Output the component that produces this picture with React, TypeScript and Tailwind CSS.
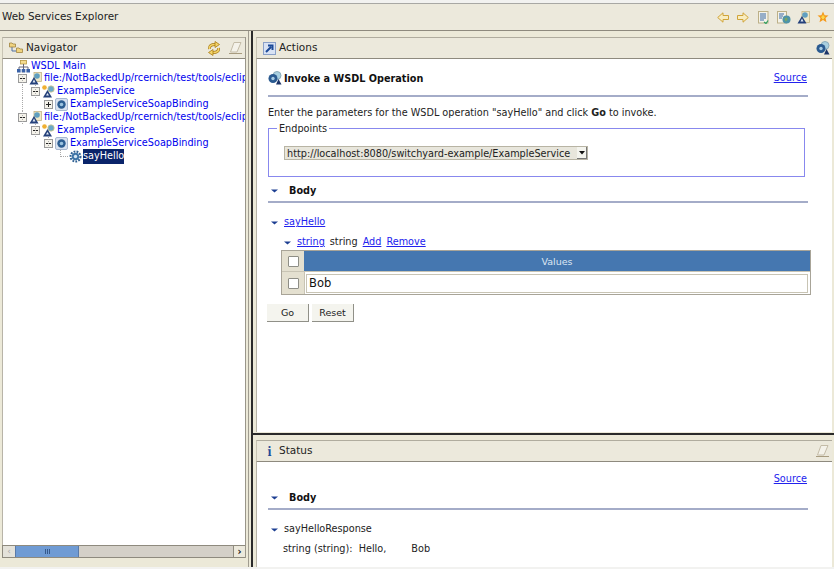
import React from "react";

const Box = ({ plus }: { plus?: boolean }) => (
  <svg width="9" height="9" viewBox="0 0 9 9" className="shrink-0">
    <rect x="0.5" y="0.5" width="8" height="8" fill="#f4f2ea" stroke="#9a9a9a" />
    <path d={plus ? "M2 4.5H7M4.5 2V7" : "M2 4.5H7"} stroke="#222" />
  </svg>
);

const Main = () => (
  <svg width="13" height="13" viewBox="0 0 13 13" className="shrink-0">
    <rect x="3.500" y="0.500" width="6" height="3.500" fill="#f4dc90" stroke="#b89840" strokeWidth="0.800" />
    <path d="M6.500 4V7M2 7H11M2 7V9M6.500 7V9M11 7V9" stroke="#667" />
    <rect x="0" y="9" width="3.600" height="3.500" fill="#3a62a8" />
    <rect x="4.700" y="9" width="3.600" height="3.500" fill="#3a62a8" />
    <rect x="9.400" y="9" width="3.600" height="3.500" fill="#3a62a8" />
  </svg>
);

const Wsdl = ({ big }: { big?: boolean }) => (
  <svg width="13" height="13" viewBox="0 0 13 13" className="shrink-0">
    <rect x="5" y="0.500" width="7.500" height={big ? 11 : 9} fill="#efe8c8" stroke="#c4b484" strokeWidth="0.800" />
    <circle cx="8" cy="4" r="2.800" fill="#5f9fc0" />
    <path d="M0.500 12.500L5 5L9.500 12.500Z" fill="#24407a" />
    <path d="M3.500 10.500L5 7.500L6.500 10.500Z" fill="#dfe8f4" />
  </svg>
);

const Svc = () => (
  <svg width="13" height="13" viewBox="0 0 13 13" className="shrink-0">
    <circle cx="2.500" cy="2.500" r="2.300" fill="#f0b030" />
    <circle cx="9" cy="4" r="3.200" fill="#6aa8c8" stroke="#dcc880" strokeWidth="0.700" />
    <path d="M1 12.500L5.500 5L10 12.500Z" fill="#24407a" />
    <path d="M4 10.500L5.500 8L7 10.500Z" fill="#e0e8f4" />
  </svg>
);

const Bind = () => (
  <svg width="13" height="13" viewBox="0 0 13 13" className="shrink-0">
    <rect x="0.500" y="0.500" width="12" height="12" rx="1.500" fill="#d8e2f0" stroke="#a8b8d0" />
    <circle cx="6.500" cy="6.500" r="4.200" fill="#2c5e92" />
    <circle cx="6.500" cy="6.500" r="1.800" fill="#9cc4e0" />
  </svg>
);

const Gear = () => (
  <svg width="13" height="13" viewBox="0 0 13 13" className="shrink-0">
    <circle cx="6.500" cy="6.500" r="5" fill="none" stroke="#2c5e92" strokeWidth="2" strokeDasharray="1.800 1.200" />
    <circle cx="6.500" cy="6.500" r="3.800" fill="#3f75a8" />
    <circle cx="6.500" cy="6.500" r="1.700" fill="#d8e8f4" />
  </svg>
);

const Twisty = () => (
  <svg width="7" height="4" viewBox="0 0 7 4" className="shrink-0">
    <path d="M0 0.500H7L3.500 3.500Z" fill="#1c3e92" />
  </svg>
);

const Eraser = () => (
  <svg width="15" height="14" viewBox="0 0 15 14" className="shrink-0">
    <path d="M6 1.500H13L9 11H2.500Z" fill="#f4f2ea" stroke="#c4bca8" />
    <path d="M1 12.500H14" stroke="#a89c80" />
  </svg>
);

const Sync = () => (
  <svg width="14" height="15" viewBox="0 0 14 15" className="shrink-0">
    <path d="M2.500 8C2 4.500 4.500 3.500 8 3.500" fill="none" stroke="#a87c18" strokeWidth="3" />
    <path d="M2.500 8C2 4.500 4.500 3.500 8 3.500" fill="none" stroke="#f4d468" strokeWidth="1.500" />
    <path d="M8 0.500L12.500 3.500L8 6.500Z" fill="#f4d468" stroke="#a87c18" strokeWidth="0.800" />
    <path d="M11.500 7C12 10.500 9.500 11.500 6 11.500" fill="none" stroke="#a87c18" strokeWidth="3" />
    <path d="M11.500 7C12 10.500 9.500 11.500 6 11.500" fill="none" stroke="#f4d468" strokeWidth="1.500" />
    <path d="M6 8.500L1.500 11.500L6 14.500Z" fill="#f4d468" stroke="#a87c18" strokeWidth="0.800" />
  </svg>
);

const Arrow = ({ right }: { right?: boolean }) => (
  <svg width="12" height="11" viewBox="0 0 12 11" className="shrink-0">
    <path
      d={right ? "M0.500 3.500H6V0.800L11.300 5.500L6 10.200V7.500H0.500Z" : "M11.500 3.500H6V0.800L0.700 5.500L6 10.200V7.500H11.500Z"}
      fill="#f8ecc0"
      stroke="#d0a438"
    />
  </svg>
);

const DocA = () => (
  <svg width="11" height="13" viewBox="0 0 11 13" className="shrink-0">
    <rect x="0.500" y="0.500" width="9.500" height="11.500" fill="#f4f2e8" stroke="#bcb088" />
    <path d="M2 3H8M2 5H8M2 7H8M2 9H6" stroke="#3a6aa8" />
    <path d="M6 11L8 12.500L10 9.500" stroke="#30a060" fill="none" strokeWidth="1.200" />
  </svg>
);

const DocB = () => (
  <svg width="14" height="13" viewBox="0 0 14 13" className="shrink-0">
    <rect x="0.500" y="0.500" width="9" height="11.500" fill="#f4f2e8" stroke="#bcb088" />
    <path d="M2 3H7M2 5H6M2 7H5" stroke="#3a6aa8" />
    <circle cx="9.500" cy="8.500" r="4" fill="#4f94a8" />
    <path d="M7.500 7.500L10 6.500L10.500 9L8.500 10.500Z" fill="#7ca860" />
  </svg>
);

const Star = () => (
  <svg width="12" height="12" viewBox="0 0 12 12" className="shrink-0">
    <path d="M6 0.500L7.600 4.200L11.500 4.500L8.500 7L9.500 11.200L6 9L2.500 11.200L3.500 7L0.500 4.500L4.400 4.200Z" fill="#f49a1c" />
    <path d="M6 3.500L7 5.500L8.500 6L7 7L7 8.500L6 7.800L5 8.500L5 7L3.500 6L5 5.500Z" fill="#fbd84c" />
  </svg>
);

const Nav = () => (
  <svg width="14" height="12" viewBox="0 0 14 12" className="shrink-0">
    <path d="M3 4V9H7" stroke="#4f6fa0" fill="none" />
    <path d="M0.500 1H3L4 2H6.500V5H0.500Z" fill="#f0d480" stroke="#a08440" strokeWidth="0.800" />
    <path d="M7.500 6H10L11 7H13.500V10.500H7.500Z" fill="#f0d480" stroke="#a08440" strokeWidth="0.800" />
  </svg>
);

const Run = () => (
  <svg width="14" height="14" viewBox="0 0 14 14" className="shrink-0">
    <circle cx="9" cy="4.500" r="4" fill="#a8cfe0" stroke="#8aaab8" />
    <circle cx="5" cy="7.500" r="4.500" fill="#2a5a90" />
    <circle cx="5" cy="7.500" r="1.700" fill="#a8cce4" />
    <path d="M8 13.500L10.500 8L13.500 13.500Z" fill="#1c3468" />
  </svg>
);

const Link = ({ children }: { children: React.ReactNode }) => (
  <span className="text-[#2222ee] underline">{children}</span>
);

const Row = ({ pad, lines, h, gap, children }: { pad: number; lines?: number[]; h?: boolean; gap?: boolean; children: React.ReactNode }) => (
  <div
    className={`relative flex items-center whitespace-nowrap ${h ? "h-[12px]" : "h-[13px]"} ${gap ? "gap-[1px]" : "gap-[2px]"}`}
    style={{ paddingLeft: pad }}
  >
    {lines?.map((x) => (
      <i key={x} className="absolute top-0 h-[13px] border-l border-dotted border-[#aaa]" style={{ left: x }} />
    ))}
    {children}
  </div>
);

const T = ({ children }: { children: React.ReactNode }) => <span className="text-[#0000ee]">{children}</span>;

const PanelHead = ({ icon, title, right }: { icon: React.ReactNode; title: string; right?: React.ReactNode }) => (
  <div className="flex h-[22px] shrink-0 items-center border-y border-l border-y-[#8e8a7e] border-l-[#c8c4b4] border-t-[#b0ac9e] bg-[#ece9dc] pl-[6px] pr-[2px]">
    {icon}
    <span className="ml-[3px] text-[10.500px] text-[#222]">{title}</span>
    <div className="ml-auto flex items-center gap-[7px]">{right}</div>
  </div>
);

const Rule = () => <div className="h-[2px] bg-[#a4acc8]" />;

const Check = () => <div className="h-[11px] w-[11px] rounded-[1px] border border-[#8e8e86] bg-white" />;

const SectionHead = () => (
  <div className="flex h-[14px] items-center pl-[3px] pt-[2px]">
    <Twisty />
    <b className="ml-[11px] text-[#111]">Body</b>
  </div>
);

export default function App() {
  return (
    <div
      className="flex h-[569px] w-[834px] flex-col overflow-hidden bg-[#ece9d8] text-[9.700px] text-[#222]"
      style={{ fontFamily: '"DejaVu Sans", sans-serif' }}
    >
      <div className="h-[3px] shrink-0 bg-[#f2f2f0]" />
      <div className="flex h-[28px] shrink-0 items-center border-y border-t-[#a8a8a4] border-b-[#8e8a7e] bg-[#ece9dc] pl-[2px] pr-[5px]">
        <span className="text-[10.400px] text-[#222]">Web Services Explorer</span>
        <div className="ml-auto flex items-center">
          <Arrow />
          <div className="w-[8px]" />
          <Arrow right />
          <div className="w-[9px]" />
          <DocA />
          <div className="w-[8px]" />
          <DocB />
          <div className="w-[6px]" />
          <Wsdl big />
          <div className="w-[7px]" />
          <Star />
        </div>
      </div>

      <div className="flex min-h-0 flex-1">
        <div className="flex w-[249px] shrink-0 flex-col border-r border-[#a09c90] pb-[9px] pl-[2px] pr-[2px] pt-[6px]">
          <div className="flex min-h-0 flex-1 flex-col border-r border-[#9a968a]">
            <PanelHead
              icon={<Nav />}
              title="Navigator"
              right={
                <>
                  <Sync />
                  <Eraser />
                </>
              }
            />
            <div className="min-h-0 flex-1 overflow-hidden border-l border-[#b8b4a8] bg-white pt-[1px]">
              <Row pad={14} h gap><Main /><T>WSDL Main</T></Row>
              <Row pad={15} lines={[19]}><Box /><Wsdl /><T>file:/NotBackedUp/rcernich/test/tools/eclip</T></Row>
              <Row pad={28} lines={[19, 32]}><Box /><Svc /><T>ExampleService</T></Row>
              <Row pad={41} lines={[19]}><Box plus /><Bind /><T>ExampleServiceSoapBinding</T></Row>
              <Row pad={15} lines={[19]}><Box /><Wsdl /><T>file:/NotBackedUp/rcernich/test/tools/eclip</T></Row>
              <Row pad={28} lines={[32]}><Box /><Svc /><T>ExampleService</T></Row>
              <Row pad={41} lines={[45]}><Box /><Bind /><T>ExampleServiceSoapBinding</T></Row>
              <Row pad={66} gap>
                <i className="absolute left-[57px] top-0 h-[7px] w-[8px] border-b border-l border-dotted border-[#aaa]" />
                <Gear />
                <span className="bg-[#0a246a] text-white">sayHello</span>
              </Row>
            </div>
            <div className="flex h-[13px] shrink-0 border-y border-l border-[#8e8a7e] bg-[#d4d0c8]">
              <div className="flex w-[12px] items-center justify-center bg-[#e4e2da] text-[9px] text-[#aaa]">‹</div>
              <div className="flex w-[64px] items-center justify-center gap-[1px] border-x border-[#5a7aa8] bg-[#6f9bd4]">
                <i className="h-[5px] w-px bg-[#35598c]" />
                <i className="h-[5px] w-px bg-[#35598c]" />
                <i className="h-[5px] w-px bg-[#35598c]" />
              </div>
              <div className="flex-1" />
              <div className="flex w-[12px] items-center justify-center border-l border-[#8e8a7e] bg-[#ece9dc] text-[10px] font-bold text-[#111]">›</div>
            </div>
          </div>
        </div>

        <div className="w-[2px] shrink-0" />
        <div className="w-[2px] shrink-0 bg-[#2a2a2a]" />

        <div className="flex min-w-0 flex-1 flex-col">
          <div className="flex h-[402px] shrink-0 flex-col pb-[1px] pl-[3px] pr-[2px] pt-[6px]">
            <PanelHead icon={<svg width="13" height="13" viewBox="0 0 13 13" className="shrink-0"><rect x="0.500" y="0.500" width="12" height="12" fill="#d8e2f4" stroke="#8aa0c8" /><path d="M3 10L8 5M5 3.500H9.500V8" stroke="#1c4a98" strokeWidth="2" fill="none" /></svg>} title="Actions" right={<Run />} />
            <div className="min-h-0 flex-1 border-l border-[#b8b4a8] bg-white">
              <div className="pl-[11px] pr-[24px]">
                <div className="flex h-[36px] items-center pt-[2px]">
                  <Run />
                  <b className="ml-[2px] pt-[2px] text-[#111]">Invoke a WSDL Operation</b>
                  <span className="ml-auto mr-[1px]"><Link>Source</Link></span>
                </div>
                <Rule />
                <p className="mt-[9px] h-[13px] leading-[13px]">
                  Enter the parameters for the WSDL operation "sayHello" and click <b>Go</b> to invoke.
                </p>
                <fieldset className="mt-[3px] h-[55px] w-[537px] border border-[#8888ee] pl-[15px]">
                  <legend className="ml-[-7px] h-[12px] px-[2px] leading-[14px]">Endpoints</legend>
                  <div className="mt-[12px] flex h-[14px] w-[304px] items-center justify-between border border-[#b8b4a4] bg-[#e8e6dc] pl-[2px]">
                    <span className="whitespace-nowrap pt-[2px]">http://localhost:8080/switchyard-example/ExampleService</span>
                    <span className="flex h-[12px] w-[10px] shrink-0 items-center justify-center border-b border-r border-[#777] bg-[#f4f4ee]">
                      <svg width="6" height="4" viewBox="0 0 6 4"><path d="M0 0H6L3 3.500Z" fill="#111" /></svg>
                    </span>
                  </div>
                </fieldset>
                <div className="mt-[6px]"><SectionHead /></div>
                <div className="mt-[4px]"><Rule /></div>
                <div className="mt-[12px] flex h-[13px] items-center pl-[3px] pt-[2px]">
                  <Twisty />
                  <span className="ml-[6px]"><Link>sayHello</Link></span>
                </div>
                <div className="mt-[7px] flex h-[13px] items-center gap-[5px] pl-[16px] pt-[2px]">
                  <Twisty />
                  <span className="ml-px"><Link>string</Link></span>
                  <span>string</span>
                  <Link>Add</Link>
                  <Link>Remove</Link>
                </div>
                <div className="ml-[13px] mt-[2px] w-[530px] border border-[#a8a498]">
                  <div className="flex h-[21px] border-b border-[#c8c4b4]">
                    <div className="flex w-[22px] items-center justify-center bg-[#e4e0d0]"><Check /></div>
                    <div className="flex flex-1 items-center justify-center bg-[#4577b0] pt-[2px] text-[9.500px] text-[#dce6f2]">Values</div>
                  </div>
                  <div className="flex h-[22px]">
                    <div className="flex w-[22px] items-center justify-center bg-[#e4e0d0]"><Check /></div>
                    <div className="flex flex-1 items-center border-l border-[#c8c4b4] pl-[1px] pr-[2px]">
                      <div className="flex h-[19px] flex-1 items-center border border-[#c8c4b4] pl-[2px] pt-[2px] text-[11.500px] text-[#111]">Bob</div>
                    </div>
                  </div>
                </div>
                <div className="ml-[-1px] mt-[9px] flex gap-[3px]">
                  <div className="flex h-[18px] w-[42px] items-center justify-center border-b border-r border-[#909088] bg-[#f4f4ee] pt-[2px] text-[9.500px]">Go</div>
                  <div className="flex h-[18px] w-[42px] items-center justify-center border-b border-r border-[#909088] bg-[#f4f4ee] pt-[2px] text-[9.500px]">Reset</div>
                </div>
              </div>
            </div>
          </div>

          <div className="h-[2px] shrink-0 bg-[#2a2a2a]" />

          <div className="flex min-h-0 flex-1 flex-col pl-[3px] pr-[2px] pt-[5px]">
            <PanelHead icon={<span className="w-[13px] shrink-0 text-center font-serif text-[13px] font-bold leading-none text-[#1c4a98]">i</span>} title="Status" right={<Eraser />} />
            <div className="min-h-0 flex-1 border-l border-[#b8b4a8] bg-white pl-[11px] pr-[24px]">
              <div className="flex h-[28px] items-center justify-end pr-[1px] pt-[6px]"><Link>Source</Link></div>
              <SectionHead />
              <div className="mt-[4px]"><Rule /></div>
              <div className="mt-[12px] flex h-[13px] items-center pl-[3px] pt-[2px]">
                <Twisty />
                <span className="ml-[6px]">sayHelloResponse</span>
              </div>
              <div className="mt-[7px] flex h-[13px] items-center pl-[15px] pt-[2px]">
                <span>string (string):&nbsp; Hello,</span>
                <span className="ml-[25px]">Bob</span>
              </div>
            </div>
          </div>
        </div>
      </div>
      <div className="h-[2px] shrink-0 bg-[#f2f2f0]" />
    </div>
  );
}
